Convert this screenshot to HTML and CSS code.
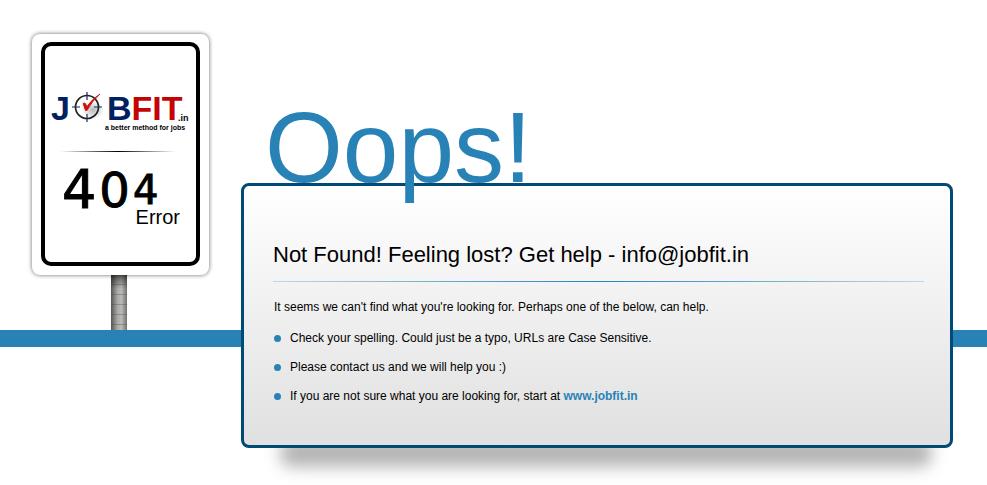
FILE: index.html
```html
<!DOCTYPE html>
<html lang="en">
<head>
<meta charset="utf-8">
<title>404 Error - Jobfit.in</title>
<link rel="stylesheet" href="styles.css">
</head>
<body>
<div class="scene">
  <aside class="post">
    <div class="sign">
      <div class="sign-face">
        <svg class="logo" viewBox="0 -12 142 56" width="142" height="56" role="img" aria-label="Jobfit.in, a better method for jobs">
          <defs>
            <radialGradient id="haze"><stop offset="0" stop-color="#999" stop-opacity=".7"/><stop offset="1" stop-color="#999" stop-opacity="0"/></radialGradient>
          </defs>
          <text class="logo-name navy" x="0" y="29">J</text>
          <ellipse cx="42" cy="19" rx="11" ry="9" fill="url(#haze)"/>
          <circle cx="36" cy="16" r="11.5" fill="none" stroke="#222" stroke-width="1.7"/>
          <path d="M36 1v8M36 23v8M21 16h8M43 16h8" stroke="#12295f" stroke-width="1.2"/>
          <path d="M32 12.500l2 -.5 2 3.500Q41 8 49 3Q41 10 36 19.500L34.500 19.500Z" fill="#d40a0a" stroke="#d40a0a" stroke-width=".8"/>
          <text class="logo-name navy" x="56" y="29">B<tspan class="red">FIT</tspan></text>
          <text class="logo-tld" x="127" y="30">.in</text>
          <text class="logo-tag" x="54" y="39">a better method for jobs</text>
        </svg>
        <div class="sign-rule"></div>
        <div class="code"><span class="far">4</span><span class="mid">0</span><span class="near">4</span></div>
        <div class="code-label">Error</div>
      </div>
    </div>
    <div class="pole"></div>
  </aside>
  <main class="notice">
    <h1 class="oops">Oops!</h1>
    <section class="panel">
      <h2 class="title">Not Found! Feeling lost? Get help - info@jobfit.in</h2>
      <p class="lead">It seems we can't find what you're looking for. Perhaps one of the below, can help.</p>
      <ul class="tips">
        <li>Check your spelling. Could just be a typo, URLs are Case Sensitive.</li>
        <li>Please contact us and we will help you :)</li>
        <li>If you are not sure what you are looking for, start at <a href="http://www.jobfit.in">www.jobfit.in</a></li>
      </ul>
    </section>
  </main>
</div>
</body>
</html>
```
FILE: styles.css
```css
* { box-sizing: border-box; }
body {
  margin: 0;
  background: #fff;
  color: #000;
  font-family: "Liberation Sans", Arial, sans-serif;
}
h1, h2, p, ul { margin: 0; padding: 0; font-weight: normal; }

.scene {
  display: flex;
  align-items: flex-start;
  gap: 32px;
  padding: 34px 34px 36px 32px;
  background: linear-gradient(#2882b6, #2882b6) 0 330px / 100% 17px no-repeat;
}

.post { flex: none; width: 177px; }
.sign {
  position: relative;
  padding: 8px 9px 9px;
  border-radius: 8px;
  background: #fff;
  box-shadow: 0 0 4px rgba(0, 0, 0, .6);
}
.sign-face {
  height: 224px;
  padding: 33px 0 0 6px;
  border: 4px solid #000;
  border-radius: 10px;
}
.logo { display: block; overflow: visible; }
.logo-name { font-size: 34px; font-weight: bold; }
.navy { fill: #00205f; }
.red { fill: #c40404; }
.logo-tld { font-size: 9px; font-weight: bold; }
.logo-tag { font-size: 7px; font-weight: bold; }

.sign-rule {
  width: 116px;
  height: 1px;
  margin: 16px 0 0 9px;
  background: linear-gradient(90deg, transparent, #000 50%, transparent);
}
.code {
  display: flex;
  align-items: center;
  gap: 3px;
  height: 56px;
  margin: 10px 0 0 11px;
  font-family: "DejaVu Sans", Verdana, sans-serif;
  line-height: 1;
  -webkit-text-stroke: 1px #000;
}
.far { font-size: 54px; }
.mid { font-size: 48px; }
.near { font-size: 40px; }
.code-label {
  margin: -13px 16px 0 0;
  font-size: 20px;
  line-height: 24px;
  text-align: right;
}
.pole {
  width: 16px;
  height: 55px;
  margin: 0 auto 0 79px;
  background:
    repeating-linear-gradient(transparent 0 9px, rgba(60, 60, 60, .3) 9px 10px),
    linear-gradient(rgba(0, 0, 0, .5), transparent 14px),
    linear-gradient(90deg, #555, #a8a9a6 40%, #bbbcb9 65%, #707070);
}

.notice { flex: 1; min-width: 0; padding-top: 56px; }
.oops {
  position: relative;
  z-index: 1;
  margin-bottom: -21px;
  padding-left: 24px;
  color: #2882b6;
  font-size: 100px;
  line-height: 114px;
}
.panel {
  position: relative;
  padding: 56px 26px 34px 29px;
  border: 3px solid #004a75;
  border-radius: 8px;
  background: linear-gradient(#fff, #f1f1f1 45%, #e0e0e0);
}
.panel::after {
  content: "";
  position: absolute;
  z-index: -1;
  right: 18px;
  bottom: -22px;
  left: 36px;
  height: 28px;
  border-radius: 12px;
  background: #b4b4b4;
  filter: blur(8px);
}
.title {
  padding-bottom: 13px;
  border-bottom: 1px solid;
  border-image: linear-gradient(90deg, #bcd9e8, #2882b6 50%, #bcd9e8) 1;
  font-size: 22px;
  line-height: 26px;
}
.lead {
  padding: 16px 0 0 1px;
  font-size: 12px;
  line-height: 18px;
}
.tips {
  padding: 8px 0 0 1px;
  list-style: none;
  font-size: 12px;
  line-height: 29px;
}
.tips li { display: flex; align-items: center; white-space: pre-wrap; }
.tips li::before {
  content: "";
  flex: none;
  width: 7px;
  height: 7px;
  margin-right: 9px;
  border-radius: 50%;
  background: #2882b6;
}
.tips a { color: #2882b6; font-weight: bold; text-decoration: none; }
```
